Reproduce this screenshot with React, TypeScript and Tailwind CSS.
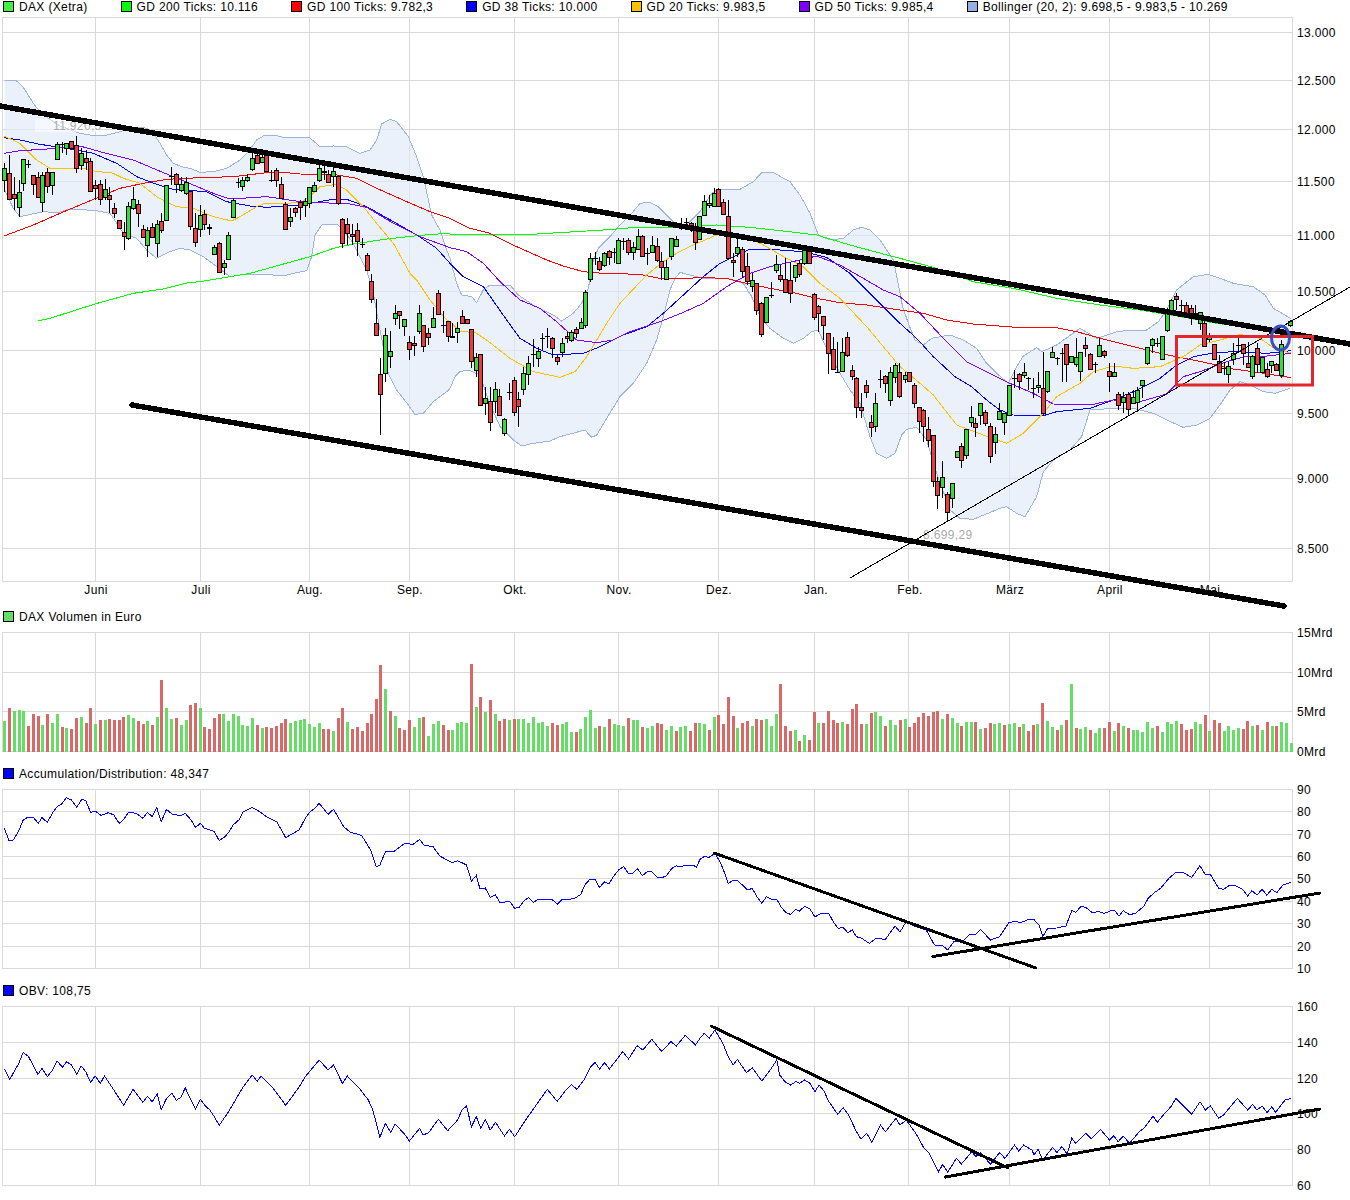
const seg = (pts: string, ox: number, oy: number, sx = 3, sy = 3) =>
  pts
    .trim()
    .split(/\s+/)
    .map((p) => {
      const [x, y] = p.split(",").map(Number);
      return [ox + x / sx, oy + y / sy];
    });

const toPoints = (pts: number[][]) => pts.map((p) => p.join(",")).join(" ");

// candles: x high top bottom low colour (g, r, d = doji)
const parseCandles = (rows: string, ox: number, oy: number) =>
  rows
    .trim()
    .split(";")
    .filter((r) => r.trim())
    .map((r) => {
      const f = r.trim().split(/\s+/);
      return {
        x: Math.round(ox + Number(f[0]) / 3),
        hi: Math.round(oy + Number(f[1]) / 3),
        top: Math.round(oy + Number(f[2]) / 3),
        bot: Math.round(oy + Number(f[3]) / 3),
        lo: Math.round(oy + Number(f[4]) / 3),
        c: f[5],
      };
    });

const candles = [
  ...parseCandles(
    `13 490 505 540 575 g;28 465 520 598 600 r;43 530 583 593 630 r;58 540 575 620 650 g;70 478 478 550 572 g;85 480 492 492 505 d;
100 525 525 553 585 r;115 515 532 592 595 r;127 515 525 607 635 g;142 505 515 558 580 r;157 515 515 556 585 g;172 425 433 478 478 g;
185 425 433 433 460 d;199 430 430 445 465 g;214 424 424 445 450 r;229 408 436 505 518 r;244 445 460 496 510 g;257 450 475 487 510 r;
271 475 484 572 575 r;286 540 556 565 600 r;301 540 553 598 615 r;314 538 568 590 600 g;328 560 586 596 640 r;343 610 625 640 655 r;
358 660 660 685 687 r;371 665 697 707 750 r;385 605 619 715 720 g;400 560 598 625 630 g;415 600 613 640 680 r;428 675 688 710 715 r;
442 680 691 736 772 g;457 670 682 712 715 r;472 660 673 728 770 g;484 640 664 691 700 r;499 555 556 661 662 g;514 502 527 527 555 d;
529 520 523 553 580 r;544 530 553 571 575 g;557 530 547 580 585 g;571 572 573 678 690 r;586 640 685 725 740 r;601 615 646 688 710 g;
613 630 643 673 690 r;628 672 681 685 705 r;643 735 742 763 765 g;658 725 730 815 820 r;671 780 790 802 825 g;685 695 706 776 780 g;
700 595 601 650 655 g;715 535 547 547 565 d;727 530 539 557 572 g;742 523 532 541 545 g;757 460 475 506 512 g;772 450 466 490 492 r;
785 450 470 487 490 g;799 450 466 512 515 r;814 510 540 540 545 d;829 505 509 541 560 r;842 530 553 593 595 r;856 605 611 688 690 r;
871 625 650 664 680 g;886 620 625 637 650 r;901 600 607 622 660 r;914 595 604 616 650 g;928 560 562 610 625 g;943 545 556 574 575 g;
958 490 503 541 545 g;971 495 512 517 540 r;985 510 523 547 550 r;1000 505 512 529 560 g;1015 525 529 610 615 r;1027 655 656 730 745 r;
1042 655 673 700 735 r;1057 673 703 708 735 r;1072 670 691 724 768 r;1085 715 732 732 745 d;1100 760 766 811 812 r;1114 822 844 898 910 r`,
    0,
    0,
  ),
  ...parseCandles(
    `1129 58 130 165 168 r;1141 235 283 343 465 r;1156 145 166 280 305 g;1171 152 214 229 265 g;1186 75 100 115 135 g;1198 92 92 106 147 r;
1213 118 118 139 167 g;1228 168 187 208 240 r;1243 168 190 196 228 r;1258 75 100 154 162 g;1270 136 136 199 216 r;1285 145 160 172 195 r;
1300 80 115 142 143 g;1315 30 40 103 105 r;1328 93 136 136 158 d;1343 124 124 169 185 r`,
    0,
    280,
  ),
  ...parseCandles(
    `7 520 557 561 565 g;22 515 535 547 578 g;35 480 499 520 520 r;50 506 506 520 522 r;64 538 538 634 655 r;78 610 622 661 682 g;
91 613 613 765 768 r;106 710 745 760 795 g;121 712 752 817 842 r;136 697 718 754 790 g;148 718 739 796 797 r;163 805 808 850 857 g;
178 700 725 725 750 d;193 680 691 787 797 r;205 725 748 769 830 r;220 650 670 718 735 g;235 618 638 673 705 g;250 567 612 612 650 d;
265 590 604 623 650 g;277 548 565 565 600 d;292 535 557 557 595 d;307 560 565 593 625 r;322 615 622 634 645 r;335 565 580 605 620 g;
350 545 557 565 580 r;364 540 545 571 575 g;379 530 538 550 565 r;392 505 517 535 535 g;406 420 427 526 535 g;421 310 325 388 395 g;
436 305 323 323 345 d;448 320 334 358 362 r;463 305 310 346 350 g;478 300 302 322 345 r;492 295 305 305 340 d;505 265 271 340 342 g;
520 265 272 272 300 d;535 265 271 307 315 r;550 275 292 307 330 g;563 238 259 298 300 g;577 255 259 317 320 r;592 295 308 308 345 d;
607 258 286 307 310 g;622 265 289 329 335 r;634 305 334 352 390 r;649 330 352 388 390 g;664 265 265 319 330 g;679 258 268 289 290 g;
692 205 230 230 240 d;707 205 215 215 230 d;722 215 220 225 245 r;736 220 238 277 300 r;748 197 199 268 270 g;763 135 152 196 197 g;
778 135 160 165 175 g;793 115 130 169 172 g;805 115 118 169 172 r;820 148 157 193 193 r;835 150 199 325 328 r;850 310 331 337 382 r;
862 265 292 310 320 g;877 290 298 364 385 r;892 310 349 394 405 r;907 370 391 409 425 g;919 400 400 481 495 r;934 455 458 553 560 r;
949 440 442 517 518 g;964 395 435 435 445 d;979 315 343 361 370 g;991 345 376 388 395 r;1006 325 388 427 430 r;1021 335 391 430 460 r;
1036 345 346 382 395 g;1048 330 340 373 380 r;1063 295 301 340 345 g;1078 295 304 340 342 r;1093 430 431 502 510 r;1105 465 469 490 545 r;
1120 498 499 526 570 r;1135 550 550 610 673 r;1150 560 598 658 660 r;1162 575 667 667 670 d;1177 565 607 664 665 g;1192 545 562 616 620 r;
1207 645 661 679 690 r;1219 680 685 772 805 r;1234 730 772 781 805 r;1249 690 706 727 745 r;1264 795 817 832 862 r;1276 730 760 829 845 g;
1291 660 688 688 715 d;1306 675 679 700 730 r;1321 650 667 751 767 g;1336 640 646 682 700 g`,
    450,
    150,
  ),
  ...parseCandles(
    `-2 340 367 437 445 r;14 365 376 386 400 g;28 367 367 392 395 r;43 400 406 458 475 r;57 470 472 514 550 r;70 478 481 529 577 r;
85 500 538 571 590 r;100 556 556 694 712 r;112 680 694 736 778 r;127 634 680 712 745 g;142 727 733 787 812 r;157 700 700 745 775 g;
170 603 604 622 625 g;184 580 589 631 655 r;199 538 538 616 628 g;214 468 502 517 530 g;226 505 520 532 560 r;241 458 460 496 525 g;
256 480 487 520 527 r;271 520 529 619 638 r;284 530 553 577 612 g;298 460 484 508 510 g;313 490 490 517 555 g;328 406 406 496 497 g;
343 360 385 385 415 d;356 370 373 394 420 r;371 340 367 376 385 g;385 380 385 385 420 d;400 385 415 415 445 d;413 365 406 412 430 g;
428 305 415 490 495 r;442 364 364 424 430 g;457 290 307 322 325 g;470 320 325 325 345 d;485 295 310 310 395 d;499 283 283 343 395 r;
514 318 319 337 340 g;527 265 322 343 350 g;541 305 307 364 392 g;556 260 286 295 320 r;570 310 313 358 360 r;584 335 342 342 370 d;
598 265 286 319 320 g;613 300 304 316 325 r;628 340 364 379 425 r;641 338 367 379 380 g;655 425 433 466 480 r;670 425 442 457 488 g;
685 425 433 478 495 r;700 420 442 460 462 g;712 410 421 457 485 g;727 390 391 406 445 g;742 290 292 340 345 g;757 265 268 286 310 g;
772 265 280 280 290 d;785 258 259 328 330 g;800 175 190 241 245 g;814 148 151 190 195 g;827 130 139 148 180 r;842 150 165 165 195 d;
857 155 166 190 195 r;872 165 175 205 225 r;886 165 190 190 205 d;900 185 187 220 240 g;913 205 220 289 290 r;928 250 260 268 275 g;
941 283 283 328 330 r;956 315 334 367 370 r;971 335 355 355 375 d;985 335 349 373 400 g;998 280 310 328 345 g;1013 265 285 285 310 d;
1028 283 283 310 345 r;1043 275 340 352 355 r;1057 315 319 379 388 g;1070 280 295 343 370 r;1085 320 322 367 370 g;1100 340 358 379 385 r;
1114 335 334 346 370 g;1127 340 343 361 362 r;1142 270 283 376 385 g;1171 210 214 226 230 g`,
    900,
    250,
  ),
];

// volume bars: x + colour + top of bar in zoomed pixels
const parseVol = (s: string, ox: number, bottom: number) =>
  s
    .trim()
    .split(/\s+/)
    .map((t) => {
      const m = t.match(/(-?\d+)([gr])(\d+)/)!;
      return { x: Math.round(ox + Number(m[1]) / 3), c: m[2], h: Math.round((bottom - Number(m[3])) / 3) };
    });

const volume = [
  ...parseVol(
    `13g363 28r324 43g333 58g330 70g333 85r378 100r342 115r348 127g375 142r342 157g369 172g342 187r381 199g384 214r387 229r354 244g351 257r369 271r324 286g372 301r360 314g360 328r357 343r360 358r360 370r351 385g345 400g354 415r363 428r372 442g363 457r375 472g351 484r240 499g324 514g357 529r354 544g375 557g360 571r315 586r309 601g324 613r381 628r387 643r354 658r342 670g342 685g363 700g342 715g348 727g375 742g378 757g354 772r375 785g384 799r381 814r384 829r378 842r369 856r357 871g369 886g363 901g360 913g357 928g372 943g381 958g369 970r387 985r387 1000g393 1015r354 1027r324 1042g366 1057r387 1072r381 1085r393 1100r369 1114r342 1129r297 1141r195 1156g267 1171r333 1186g348 1198r384 1213r390 1228r360 1243g381 1258g354 1270r351 1285g408 1300g372 1315g363 1328r375 1343r390`,
    0,
    455,
  ),
  ...parseVol(
    `7g270 22g249 34g246 49g249 64r72 79g201 91r171 106g216 121r180 136g222 148r243 163r237 178g240 193r237 205g237 220g237 235g249 250g231 265g249 277g246 292g258 307r249 322r255 335g252 349g246 364g276 379r276 391g267 406g231 421g210 436g264 448r258 463g261 478r237 493g252 505g255 520g258 535r234 550g240 562g240 577r261 592g264 607g258 622r249 634r252 649g270 664g258 679r273 691g261 706g258 721r273 736r249 748g249 763g252 778r270 793g231 805r225 820r252 835r171 850r228 862g264 877r249 892r243 907g258 919r237 934r240 949g237 964g258 979g222 991r132 1006r258 1021r273 1036g270 1048r303 1063g285 1078r300 1093r216 1105g249 1120r249 1135r213 1150r240 1162r249 1177g246 1192r252 1207r207 1219r192 1234r252 1249g252 1264r219 1276g216 1291g228 1306r258 1321g240 1336g255`,
    450,
    335,
  ),
  ...parseVol(
    `-1r360 14g357 28r381 43r369 55r351 70r339 85r348 100r336 112r333 127g357 142r342 157g354 170g369 184r378 199g366 214g366 226r366 241g387 256r384 271r369 283g372 298g369 313r375 328g372 343g369 356r381 370g372 385r393 400r375 412g372 427r309 442g363 457g381 470r390 484g375 499r360 514g252 527r384 541g387 556g381 571r390 584g399 598g384 613r384 628r366 641g393 655r369 670g378 685r384 700g390 712g390 727g396 742g366 757g384 772r378 785g396 800g366 814g372 827g363 842r372 857r390 872r387 884g366 899g372 914r345 928g393 941r360 956r369 971g393 985g378 998g390 1013g384 1028r387 1042r363 1057g378 1070r375 1085g390 1100r366 1115g378 1127r378 1142g366 1157g369 1172g429`,
    900,
    455,
  ),
];

const bandUpper = [
  ...seg(
    `14,243 30,240 50,243 70,262 100,310 120,335 150,358 180,378 240,400 270,405 320,405 360,395 395,385 430,382 455,392 480,430 500,465 520,490 545,500 570,505 600,517 640,515 680,505 720,480 745,455 770,420 790,408 825,406 850,412 930,414 960,440 1000,438 1040,440 1080,460 1110,450 1130,420 1145,372 1170,358 1190,365 1225,410 1250,470 1270,530 1285,600 1295,645 1320,690 1340,750`,
    0,
    0,
  ),
  ...seg(
    `0,325 20,400 35,435 65,440 80,458 100,420 120,405 180,405 205,435 250,465 280,480 310,495 335,513 370,490 395,460 415,415 430,330 445,295 480,260 510,225 545,190 570,160 600,157 625,170 650,195 690,235 720,215 750,185 785,130 805,118 870,118 910,95 935,68 970,68 1020,95 1050,135 1080,190 1105,255 1140,270 1180,265 1210,240 1235,232 1260,240 1290,270 1330,330 1340,380`,
    450,
    150,
  ),
  ...seg(
    `0,130 8,170 25,220 45,270 70,285 95,265 150,255 190,270 230,295 260,340 290,370 325,400 350,350 370,318 410,293 425,305 470,285 540,235 590,265 650,245 700,240 740,240 775,215 800,180 830,120 880,80 925,73 960,85 1000,100 1060,110 1095,135 1120,175 1172,205`,
    900,
    250,
  ),
];

const bandLower = [
  ...seg(
    `14,570 40,625 60,650 130,635 175,638 205,628 260,630 290,632 330,640 370,700 410,715 440,750 470,775 510,755 540,745 570,750 610,770 650,800 690,830 740,822 790,822 850,828 880,820 920,812 935,770 945,705 965,675 1010,672 1030,690 1060,730 1100,810 1120,880`,
    0,
    0,
  ),
  ...seg(`1140,150 1165,280 1190,330 1225,375 1245,403 1270,400 1300,365 1340,335`, 0, 280),
  ...seg(
    `0,715 15,680 30,665 55,660 90,675 115,750 150,830 190,870 215,888 250,880 300,873 330,860 405,840 425,862 440,855 470,805 510,740 550,700 590,640 620,570 640,500 660,420 675,385 690,367 720,375 760,385 830,385 880,400 905,440 930,500 960,535 1000,565 1030,580 1060,565 1085,545 1105,540 1120,575 1170,670`,
    450,
    150,
  ),
  ...seg(
    `0,100 30,150 60,190 90,290 110,340 140,355 165,340 185,285 200,268 230,262 260,300 290,400 330,510 360,535 400,538 480,505 500,500 530,520 555,530 590,470 610,395 640,360`,
    840,
    340,
  ),
  ...seg(
    `510,600 545,560 570,480 640,475 700,475 760,490 800,510 850,532 890,525 930,505 960,465 990,420 1020,395 1050,405 1090,425 1125,430 1170,415`,
    900,
    250,
  ),
];

const bandOutline = toPoints([...bandUpper, ...[...bandLower].reverse()]);

const gd200 = toPoints([
  ...seg(`115,122 150,115 285,72 400,40 490,27 565,8`, 0, 280),
  ...seg(`600,845 750,820 930,770 1000,745 1060,732 1160,717 1250,707 1340,700`, 0, 0),
  ...seg(`0,252 130,252 260,252 460,240 560,232 700,232 800,225 900,232 1000,243 1100,255 1200,285 1300,312`, 450, 150),
  ...seg(`0,25 100,52 220,95 340,115 470,145 600,165 720,180 830,198 950,220 1100,240 1130,245`, 900, 250),
]);

const gd100 = toPoints([
  ...seg(`12,708 100,675 180,640 300,590 360,565 430,550 500,538 600,533 700,530 800,518 850,517 900,522 1010,525 1070,535 1130,565 1220,605 1290,635`, 0, 0),
  ...seg(`0,205 60,235 120,250 200,290 290,330 340,348 400,365 460,370 570,373 640,387 760,383 830,385 880,398 960,415 1040,430 1100,445 1170,458 1250,465`, 450, 150),
  ...seg(`0,180 70,190 140,210 220,222 350,232 470,233 530,245 620,270 720,295 780,310 830,320 880,330 950,345 1000,357 1060,365 1110,373 1172,383`, 900, 250),
]);

const gd38 = toPoints([
  ...seg(`12,413 60,420 120,433 200,445 280,460 350,490 410,530 470,553 520,568 620,575 680,605 750,618 800,622 900,615 1000,598 1040,598 1100,620 1180,665 1250,705 1310,745`, 0, 0),
  ...seg(`0,340 40,380 100,410 170,510 210,565 260,595 310,615 400,610 450,590 520,555 590,530 640,490 700,435 760,380 810,340 870,310 900,298 990,300 1060,305 1130,322 1200,370 1260,430 1310,480`, 450, 150),
  ...seg(`0,220 50,265 100,320 165,380 215,410 260,450 300,480 340,495 430,497 470,485 570,475 640,450 700,425 780,385 830,345 880,320 950,307 1020,305 1100,310 1172,302`, 900, 250),
]);

const gd20 = toPoints([
  ...seg(`12,408 60,430 110,480 150,505 250,505 290,515 335,518 370,535 420,550 470,590 530,620 580,625 640,650 695,663 720,650 770,620 790,612 900,608 930,590 960,560 1010,553 1040,570 1090,620 1130,670 1180,730 1230,820`, 0, 0),
  ...seg(`1250,0 1290,60 1340,120`, 0, 280),
  ...seg(`0,515 30,545 75,547 110,570 180,625 250,665 330,682 375,665 410,620 470,520 510,460 590,375 640,335 680,310 730,285 800,255 860,250 935,282 1010,325 1060,350 1110,400 1170,445 1250,530 1300,590`, 450, 150),
  ...seg(`0,350 60,400 100,435 170,525 250,555 320,580 370,550 430,490 470,440 540,400 580,365 640,348 700,355 780,350 850,320 900,285 960,270 1020,253 1080,265 1130,300 1172,308`, 900, 250),
]);

const gd50 = toPoints([
  ...seg(`12,460 60,452 130,448 240,438 300,455 400,480 500,522 580,555 640,580 690,597 800,590 900,605 1050,612 1100,622 1180,670 1260,710`, 0, 0),
  ...seg(`0,293 50,305 100,340 150,395 210,450 270,475 320,515 380,570 440,578 490,570 540,545 630,515 700,487 760,460 830,410 900,370 960,350 1050,330 1100,318 1170,345 1240,385 1300,420`, 450, 150),
  ...seg(`0,140 60,190 130,265 200,335 270,370 330,400 400,430 460,462 570,465 640,450 720,455 800,432 850,380 900,365 980,335 1040,318 1100,318 1172,310`, 900, 250),
]);

const adLine = toPoints([
  ...seg(
    `10,175 20,212 30,210 42,182 52,150 62,142 75,143 86,160 94,143 106,157 118,128 128,110 138,102 149,83 160,90 172,112 183,88 192,92 203,127 213,123 226,136 243,128 255,135 267,160 276,150 288,127 305,130 320,145 330,127 341,140 351,112 361,155 373,118 385,132 405,137 415,130 428,150 438,172 449,160 458,175 480,184 491,212 502,202 512,188 522,165 535,150 545,125 565,112 585,128 600,143 620,155 640,203 670,180 685,142 695,125 705,115 715,100 735,133 747,118 770,170 785,187 810,196 830,240 843,290 851,285 863,246 882,245 907,220 925,223 940,208 950,226 970,230 985,258 1013,278 1025,272 1045,285 1056,333 1067,316 1075,357 1087,354 1098,382 1110,375 1120,397 1142,395 1153,415 1163,412 1172,395 1184,382 1195,397 1206,388 1238,390 1248,403 1259,388 1270,390 1290,383 1301,373 1310,345 1322,327 1333,329 1343,352 1354,336 1364,341 1376,316 1387,298 1397,290 1408,311 1418,309 1428,296 1439,317 1450,305 1460,306 1473,323 1483,323 1493,317 1505,295 1515,287 1524,291 1535,286 1555,287 1560,292`,
    0,
    770,
    2.24,
  ),
  ...seg(
    `0,268 10,260 22,262 36,250 50,280 58,305 68,340 80,331 90,331 115,360 126,355 137,380 149,400 160,380 172,387 185,388 195,410 207,428 218,433 231,418 240,423 252,409 265,417 277,441 290,431 310,430 322,457 333,475 345,472 356,488 367,480 377,500 390,505 408,520 424,505 447,508 460,485 470,468 482,486 497,455 520,470 545,480 565,525 585,527 597,540 612,515 636,510 650,493 663,495 676,478 700,510 722,500 745,457 757,455 775,457 792,448 805,449 817,465 826,500 838,475 860,474 882,468 896,422 906,427 918,409 930,412 945,428 960,425 975,430 990,422 1000,423 1010,438 1020,422 1035,434 1050,430 1070,408 1080,385 1095,368 1110,355 1130,325 1147,307 1165,308 1185,322 1205,287 1218,315 1230,313 1250,355 1262,358 1275,347 1290,347 1308,358 1320,378 1330,362 1342,375 1355,358 1366,376 1378,358 1390,368 1405,345 1425,337`,
    700,
    770,
    2.41,
  ),
]);

const obvLine = toPoints([
  ...seg(
    `10,898 22,928 42,880 52,847 64,860 85,913 94,895 106,920 118,900 128,873 140,892 149,875 160,885 172,912 182,888 192,905 203,937 213,918 225,940 234,918 255,960 267,985 277,1006 298,958 320,997 330,979 341,995 352,972 361,1020 373,985 385,969 395,991 405,982 415,954 428,990 438,1018 449,988 460,1008 470,1020 480,1040 491,1066 512,1025 545,950 565,915 576,934 585,918 612,955 640,1006 668,955 685,918 715,870 735,900 747,885 767,940 778,918 805,955 825,990 835,1020 843,1060 851,1102 863,1060 875,1087 885,1063 905,1090 917,1113 940,1075 948,1095 960,1088 982,1048 1003,1082 1025,1050 1035,1020 1045,1008 1056,1070 1067,1040 1077,1075 1087,1048 1098,1080 1110,1057 1130,1098 1141,1078 1153,1100 1180,1045 1226,958 1248,994 1268,960 1280,943 1292,958 1308,930 1322,892 1333,877 1343,897 1354,878 1365,897 1395,845 1408,867 1427,827 1440,840 1460,808 1482,844 1503,815 1515,828 1535,796 1558,825`,
    0,
    770,
    2.24,
  ),
  ...seg(
    `0,805 10,790 22,805 36,780 55,820 68,860 80,885 90,868 112,908 126,893 149,933 172,895 185,870 192,915 205,935 218,945 231,935 240,940 252,930 265,940 277,965 287,945 300,965 308,990 332,1033 345,1013 358,1035 377,1085 388,1107 402,1090 414,1117 435,1065 447,1085 472,1045 482,1065 497,1050 520,1090 540,1135 552,1150 575,1205 585,1183 597,1207 618,1165 630,1182 655,1145 665,1160 676,1148 700,1183 722,1148 735,1165 758,1125 768,1143 780,1125 800,1140 805,1155 815,1138 826,1170 850,1132 860,1148 872,1130 885,1152 896,1105 905,1120 930,1090 943,1107 965,1078 987,1110 997,1098 1008,1115 1020,1098 1035,1120 1060,1083 1070,1075 1092,1038 1102,1057 1120,1030 1135,1010 1147,985 1185,1033 1205,995 1218,1020 1230,1007 1250,1045 1262,1035 1295,985 1320,1020 1332,1003 1342,1020 1355,1008 1367,1028 1378,1010 1387,1027 1410,990 1425,985`,
    700,
    770,
    2.41,
  ),
]);

const months = [
  ["Juni", 96],
  ["Juli", 201],
  ["Aug.", 310],
  ["Sep.", 410],
  ["Okt.", 515],
  ["Nov.", 619],
  ["Dez.", 719],
  ["Jan.", 816],
  ["Feb.", 910],
  ["März", 1010],
  ["April", 1110],
  ["Mai", 1210],
] as const;

const gridX = [95, 200, 309, 409, 514, 618, 718, 814, 908, 1009, 1109, 1209];

function Legend({ items, compact }: { items: { color: string; label: string }[]; compact?: boolean }) {
  return (
    <div className={compact ? "mb-[4px] flex h-[13px] items-center gap-[33px] pl-[3px]" : "flex h-[17px] items-center gap-[33px] pl-[3px]"}>
      {items.map((item) => (
        <div key={item.label} className="flex items-center gap-[5px] whitespace-nowrap">
          <span className="h-[11px] w-[11px] border border-black" style={{ backgroundColor: item.color }} />
          <span>{item.label}</span>
        </div>
      ))}
    </div>
  );
}

// plot frame plus grid lines, in page coordinates
function Grid({ ys, top, bottom }: { ys: number[]; top: number; bottom: number }) {
  return (
    <g stroke="#d9d9d9" strokeWidth={1} shapeRendering="crispEdges">
      {ys.map((y) => (
        <line key={y} x1={2} x2={1293} y1={y + 0.5} y2={y + 0.5} />
      ))}
      {[2, ...gridX, 1292].map((x) => (
        <line key={x} x1={x + 0.5} x2={x + 0.5} y1={top} y2={bottom + 1} />
      ))}
    </g>
  );
}

function Ticks({ ticks }: { ticks: [string, number][] }) {
  return (
    <>
      {ticks.map(([label, y]) => (
        <text key={label} x={1297} y={y + 4.5} fill="#000">
          {label}
        </text>
      ))}
    </>
  );
}

function Line({ points, color, width = 1 }: { points: string; color: string; width?: number }) {
  return <polyline points={points} fill="none" stroke={color} strokeWidth={width} shapeRendering="crispEdges" />;
}

function Trend({ x1, y1, x2, y2, width }: { x1: number; y1: number; x2: number; y2: number; width: number }) {
  return (
    <line x1={x1} y1={y1} x2={x2} y2={y2} stroke="#000" strokeWidth={width} strokeLinecap="round" shapeRendering="crispEdges" />
  );
}

function Candle({ x, hi, top, bot, lo, c }: (typeof candles)[number]) {
  return (
    <g shapeRendering="crispEdges">
      <line x1={x + 0.5} x2={x + 0.5} y1={hi} y2={lo} stroke="#000" />
      {c === "d" ? (
        <line x1={x - 2} x2={x + 3} y1={top + 0.5} y2={top + 0.5} stroke="#000" />
      ) : (
        <rect
          x={x - 1.5}
          y={top + 0.5}
          width={4}
          height={Math.max(bot - top, 1)}
          fill={c === "g" ? "#33dd33" : "#ee3a3a"}
          stroke="#000"
        />
      )}
    </g>
  );
}

function PriceChart() {
  const ticks: [string, number][] = [
    ["13.000", 32],
    ["12.500", 80],
    ["12.000", 129],
    ["11.500", 181],
    ["11.000", 235],
    ["10.500", 291],
    ["10.000", 350],
    ["9.500", 413],
    ["9.000", 478],
    ["8.500", 548],
  ];
  return (
    <svg width={1350} height={591} viewBox="0 17 1350 591" className="block overflow-visible">
      <Grid ys={[17, 32, 80, 129, 181, 235, 291, 350, 413, 478, 548, 581]} top={17} bottom={581} />
      <polygon points={bandOutline} fill="#dfe9f8" fillOpacity={0.65} />
      <Line points={toPoints(bandUpper)} color="#9db4de" />
      <Line points={toPoints(bandLower)} color="#9db4de" />
      <rect x={35} y={119} width={62} height={13} fill="#fff" fillOpacity={0.5} />
      <text x={53} y={130} fill="#aaaaaa">
        11.920,5
      </text>
      <text x={923} y={539} fill="#aaaaaa">
        8.699,29
      </text>
      <Line points={gd200} color="#00ff00" />
      <Line points={gd100} color="#ff0000" />
      <Line points={gd38} color="#0000ff" />
      <Line points={gd20} color="#ffc000" />
      <Line points={gd50} color="#8000ff" />
      {candles.map((c, i) => (
        <Candle key={i} {...c} />
      ))}
      <Ticks ticks={ticks} />
      {months.map(([label, x]) => (
        <text key={label} x={x} y={594} textAnchor="middle" fill="#000">
          {label}
        </text>
      ))}
      <Trend x1={0} y1={106} x2={1350} y2={344} width={5.5} />
      <Trend x1={132} y1={405} x2={1284} y2={606} width={5.5} />
      <line x1={850} y1={578} x2={1350} y2={287} stroke="#000" strokeWidth={1} shapeRendering="crispEdges" />
      <rect x={1176.5} y={336.5} width={136} height={48.5} fill="none" stroke="#e2262e" strokeWidth={3} />
      <ellipse cx={1280.5} cy={338} rx={9} ry={12} fill="none" stroke="#3a4ec0" strokeWidth={3} />
    </svg>
  );
}

function VolumeChart() {
  return (
    <svg width={1350} height={140} viewBox="0 625 1350 140" className="block">
      <Grid ys={[632, 672, 711, 751]} top={632} bottom={751} />
      <g shapeRendering="crispEdges">
        {volume.map((v, i) => (
          <rect key={i} x={v.x - 1} y={752 - v.h} width={3} height={v.h} fill={v.c === "g" ? "#66dd66" : "#d96868"} />
        ))}
      </g>
      <Ticks
        ticks={[
          ["15Mrd", 632],
          ["10Mrd", 672],
          ["5Mrd", 711],
          ["0Mrd", 751],
        ]}
      />
    </svg>
  );
}

function AccDistChart() {
  const ys = [789, 811, 834, 856, 878, 901, 923, 946, 968];
  return (
    <svg width={1350} height={200} viewBox="0 782 1350 200" className="block">
      <Grid ys={ys} top={789} bottom={968} />
      <Line points={adLine} color="#0000ff" />
      <Ticks ticks={ys.map((y, i) => [String(90 - i * 10), y])} />
      <Trend x1={714} y1={853} x2={1036} y2={968} width={3} />
      <Trend x1={933} y1={956.5} x2={1320} y2={893} width={3} />
    </svg>
  );
}

function ObvChart() {
  const ys = [1006, 1042, 1078, 1113, 1149, 1185];
  return (
    <svg width={1350} height={201} viewBox="0 999 1350 201" className="block">
      <Grid ys={ys} top={1006} bottom={1185} />
      <Line points={obvLine} color="#0000ff" />
      <Ticks ticks={ys.map((y, i) => [String(160 - i * 20), y])} />
      <Trend x1={711} y1={1026} x2={1008} y2={1168} width={3} />
      <Trend x1={945.5} y1={1177} x2={1320} y2={1109} width={3} />
    </svg>
  );
}

export default function App() {
  return (
    <div className="w-[1350px] overflow-hidden bg-white font-['Liberation_Sans',sans-serif] text-[12px] tracking-[0.35px] text-black">
      <Legend
        compact
        items={[
          { color: "#44ee44", label: "DAX (Xetra)" },
          { color: "#00ff00", label: "GD 200 Ticks: 10.116" },
          { color: "#ff0000", label: "GD 100 Ticks: 9.782,3" },
          { color: "#0000ff", label: "GD 38 Ticks: 10.000" },
          { color: "#ffc000", label: "GD 20 Ticks: 9.983,5" },
          { color: "#8000ff", label: "GD 50 Ticks: 9.985,4" },
          { color: "#96afe0", label: "Bollinger (20, 2): 9.698,5 - 9.983,5 - 10.269" },
        ]}
      />
      <PriceChart />
      <Legend items={[{ color: "#66dd66", label: "DAX Volumen in Euro" }]} />
      <VolumeChart />
      <Legend items={[{ color: "#0000ff", label: "Accumulation/Distribution: 48,347" }]} />
      <AccDistChart />
      <Legend items={[{ color: "#0000ff", label: "OBV: 108,75" }]} />
      <ObvChart />
    </div>
  );
}
